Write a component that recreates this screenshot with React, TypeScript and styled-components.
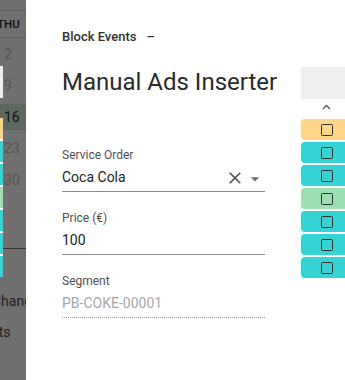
import React from "react";
import styled, { createGlobalStyle } from "styled-components";

type Tone = "yellow" | "teal" | "green";

const toneColors: Record<Tone, string> = {
  yellow: "#fdd68a",
  teal: "#35d3d4",
  green: "#9ee0b2",
};

const events: Tone[] = ["yellow", "teal", "teal", "green", "teal", "teal", "teal"];

const weekDays = [
  { day: "2", today: false },
  { day: "9", today: false },
  { day: "16", today: true },
  { day: "23", today: false },
  { day: "30", today: false },
];

export default function App() {
  return (
    <>
      <GlobalStyle />
      <Screen>
        <Calendar>
          <DayHeader>
            <Clipped $shift={-3}>THU</Clipped>
          </DayHeader>
          {weekDays.map((w) => (
            <DayCell key={w.day} $today={w.today}>
              {w.day}
            </DayCell>
          ))}
          <CalendarDivider />
          <SideLink>
            <Clipped $shift={-8}>Change</Clipped>
          </SideLink>
          <SideLink>
            <Clipped $shift={-31}>Events</Clipped>
          </SideLink>
        </Calendar>

        <Overlay />

        <EventStrip>
          <StripBlock />
          <StripChips>
            {events.map((tone, i) => (
              <StripChip key={i} $tone={tone} />
            ))}
          </StripChips>
        </EventStrip>

        <Drawer>
          <DrawerHeader>
            <span>Block Events</span>
            <span>–</span>
          </DrawerHeader>

          <DrawerBody>
            <FormColumn>
              <Title>Manual Ads Inserter</Title>
              <Form>
                <Field>
                  <Label>Service Order</Label>
                  <InputRow>
                    <Value>Coca Cola</Value>
                    <Adornment viewBox="0 0 24 24">
                      <path
                        fill="#555"
                        d="M19 6.41 17.59 5 12 10.59 6.41 5 5 6.41 10.59 12 5 17.59 6.41 19 12 13.41 17.59 19 19 17.59 13.41 12z"
                      />
                    </Adornment>
                    <Adornment viewBox="0 0 24 24" $shift={1.5}>
                      <path fill="#707070" d="M7 10l5 5 5-5z" />
                    </Adornment>
                  </InputRow>
                </Field>

                <Field>
                  <Label>Price (€)</Label>
                  <InputRow>
                    <Value>100</Value>
                  </InputRow>
                </Field>

                <Field>
                  <Label>Segment</Label>
                  <InputRow $disabled>
                    <Value $disabled>PB-COKE-00001</Value>
                  </InputRow>
                </Field>
              </Form>
            </FormColumn>

            <PreviewColumn>
              <PreviewHead />
              <ChevronRow>
                <svg width="9" height="6" viewBox="0 0 9 6">
                  <polyline
                    points="1,5 4.5,1.5 8,5"
                    fill="none"
                    stroke="#555"
                    strokeWidth="1.3"
                  />
                </svg>
              </ChevronRow>
              <ChipList>
                {events.map((tone, i) => (
                  <Chip key={i} $tone={tone}>
                    <CheckBox />
                  </Chip>
                ))}
              </ChipList>
            </PreviewColumn>
          </DrawerBody>
        </Drawer>
      </Screen>
    </>
  );
}

const GlobalStyle = createGlobalStyle`
  html, body {
    margin: 0;
    padding: 0;
  }
  body {
    font-family: Roboto, "Liberation Sans", sans-serif;
    background: #fff;
  }
`;

const Screen = styled.div`
  position: relative;
  width: 345px;
  height: 380px;
  overflow: hidden;
  background: #fff;
`;

/* background calendar, mostly hidden behind the drawer */
const Calendar = styled.div`
  width: 26px;
  padding-top: 10px;
  display: flex;
  flex-direction: column;
`;

const Clipped = styled.span<{ $shift: number }>`
  display: block;
  margin-left: ${(p) => p.$shift}px;
  white-space: nowrap;
`;

const DayHeader = styled.div`
  height: 26px;
  border-top: 1px solid #d4d4d4;
  border-bottom: 1px solid #d4d4d4;
  display: flex;
  align-items: center;
  font-size: 11.5px;
  font-weight: 500;
  color: #222;
`;

const DayCell = styled.div<{ $today: boolean }>`
  height: 31.5px;
  display: flex;
  align-items: center;
  padding-left: 4px;
  font-size: 14px;
  color: ${(p) => (p.$today ? "#2e2e2e" : "#c4c4c4")};
  background: ${(p) =>
    p.$today
      ? "linear-gradient(transparent 3px, #d6ecd8 3px, #d6ecd8 29px, transparent 29px)"
      : "transparent"};
`;

const CalendarDivider = styled.div`
  margin-top: 52px;
  border-top: 1px solid #7a7a7a;
`;

const SideLink = styled.div`
  margin-top: 42px;
  font-size: 14px;
  line-height: 20px;
  color: #4a4a4a;

  & + & {
    margin-top: 11px;
  }
`;

const Overlay = styled.div`
  position: absolute;
  inset: 0;
  z-index: 1;
  background: rgba(0, 0, 0, 0.56);
`;

/* sliver of event chips that sits above the dimmed backdrop */
const EventStrip = styled.div`
  position: absolute;
  top: 66px;
  left: 0;
  z-index: 2;
  width: 3px;
  display: flex;
  flex-direction: column;
`;

const StripBlock = styled.div`
  height: 32px;
  margin-bottom: 20px;
  background: #eceeed;
`;

const StripChips = styled.div`
  display: flex;
  flex-direction: column;
  gap: 2px;
  background: #fff;
`;

const StripChip = styled.div<{ $tone: Tone }>`
  height: 21px;
  background: ${(p) => toneColors[p.$tone]};
`;

const Drawer = styled.div`
  position: absolute;
  top: 0;
  bottom: 0;
  left: 26px;
  z-index: 3;
  width: 420px;
  box-sizing: border-box;
  padding: 29px 0 0 36px;
  background: #fff;
`;

const DrawerHeader = styled.div`
  display: flex;
  align-items: center;
  gap: 10px;
  font-size: 13px;
  line-height: 16px;
  font-weight: 500;
  color: #303030;
`;

const DrawerBody = styled.div`
  display: flex;
  align-items: flex-start;
  margin-top: 22px;
`;

const FormColumn = styled.div`
  width: 239px;
  flex-shrink: 0;
`;

const Title = styled.h1`
  margin: 0;
  font-size: 24px;
  line-height: 30px;
  font-weight: 400;
  color: #2b2b2b;
  white-space: nowrap;
`;

const Form = styled.div`
  width: 203px;
  margin-top: 50px;
  display: flex;
  flex-direction: column;
  gap: 18px;
`;

const Field = styled.div`
  display: flex;
  flex-direction: column;
`;

const Label = styled.div`
  font-size: 12px;
  line-height: 16px;
  color: #505050;
  margin-bottom: 4px;
`;

const InputRow = styled.div<{ $disabled?: boolean }>`
  height: 24px;
  display: flex;
  align-items: flex-start;
  border-bottom: 1px ${(p) => (p.$disabled ? "dotted #9a9a9a" : "solid #8c8c8c")};
`;

const Value = styled.div<{ $disabled?: boolean }>`
  flex: 1;
  font-size: 14px;
  line-height: 20px;
  color: ${(p) => (p.$disabled ? "#a8a8a8" : "#222")};
`;

const Adornment = styled.svg<{ $shift?: number }>`
  width: 20px;
  height: 20px;
  flex-shrink: 0;
  margin-top: ${(p) => p.$shift ?? 0.5}px;
`;

const PreviewColumn = styled.div`
  width: 51px;
  flex-shrink: 0;
  display: flex;
  flex-direction: column;
`;

const PreviewHead = styled.div`
  height: 32px;
  background: #eef0ef;
`;

const ChevronRow = styled.div`
  height: 20px;
  box-sizing: border-box;
  padding-bottom: 4px;
  display: flex;
  align-items: center;
  justify-content: center;
`;

const ChipList = styled.div`
  display: flex;
  flex-direction: column;
  gap: 2px;
`;

const Chip = styled.div<{ $tone: Tone }>`
  height: 21px;
  border-radius: 4px;
  background: ${(p) => toneColors[p.$tone]};
  display: flex;
  align-items: center;
  justify-content: center;
`;

const CheckBox = styled.div`
  width: 12px;
  height: 12px;
  box-sizing: border-box;
  border: 1.6px solid #2f2f2f;
  border-radius: 1.5px;
`;
